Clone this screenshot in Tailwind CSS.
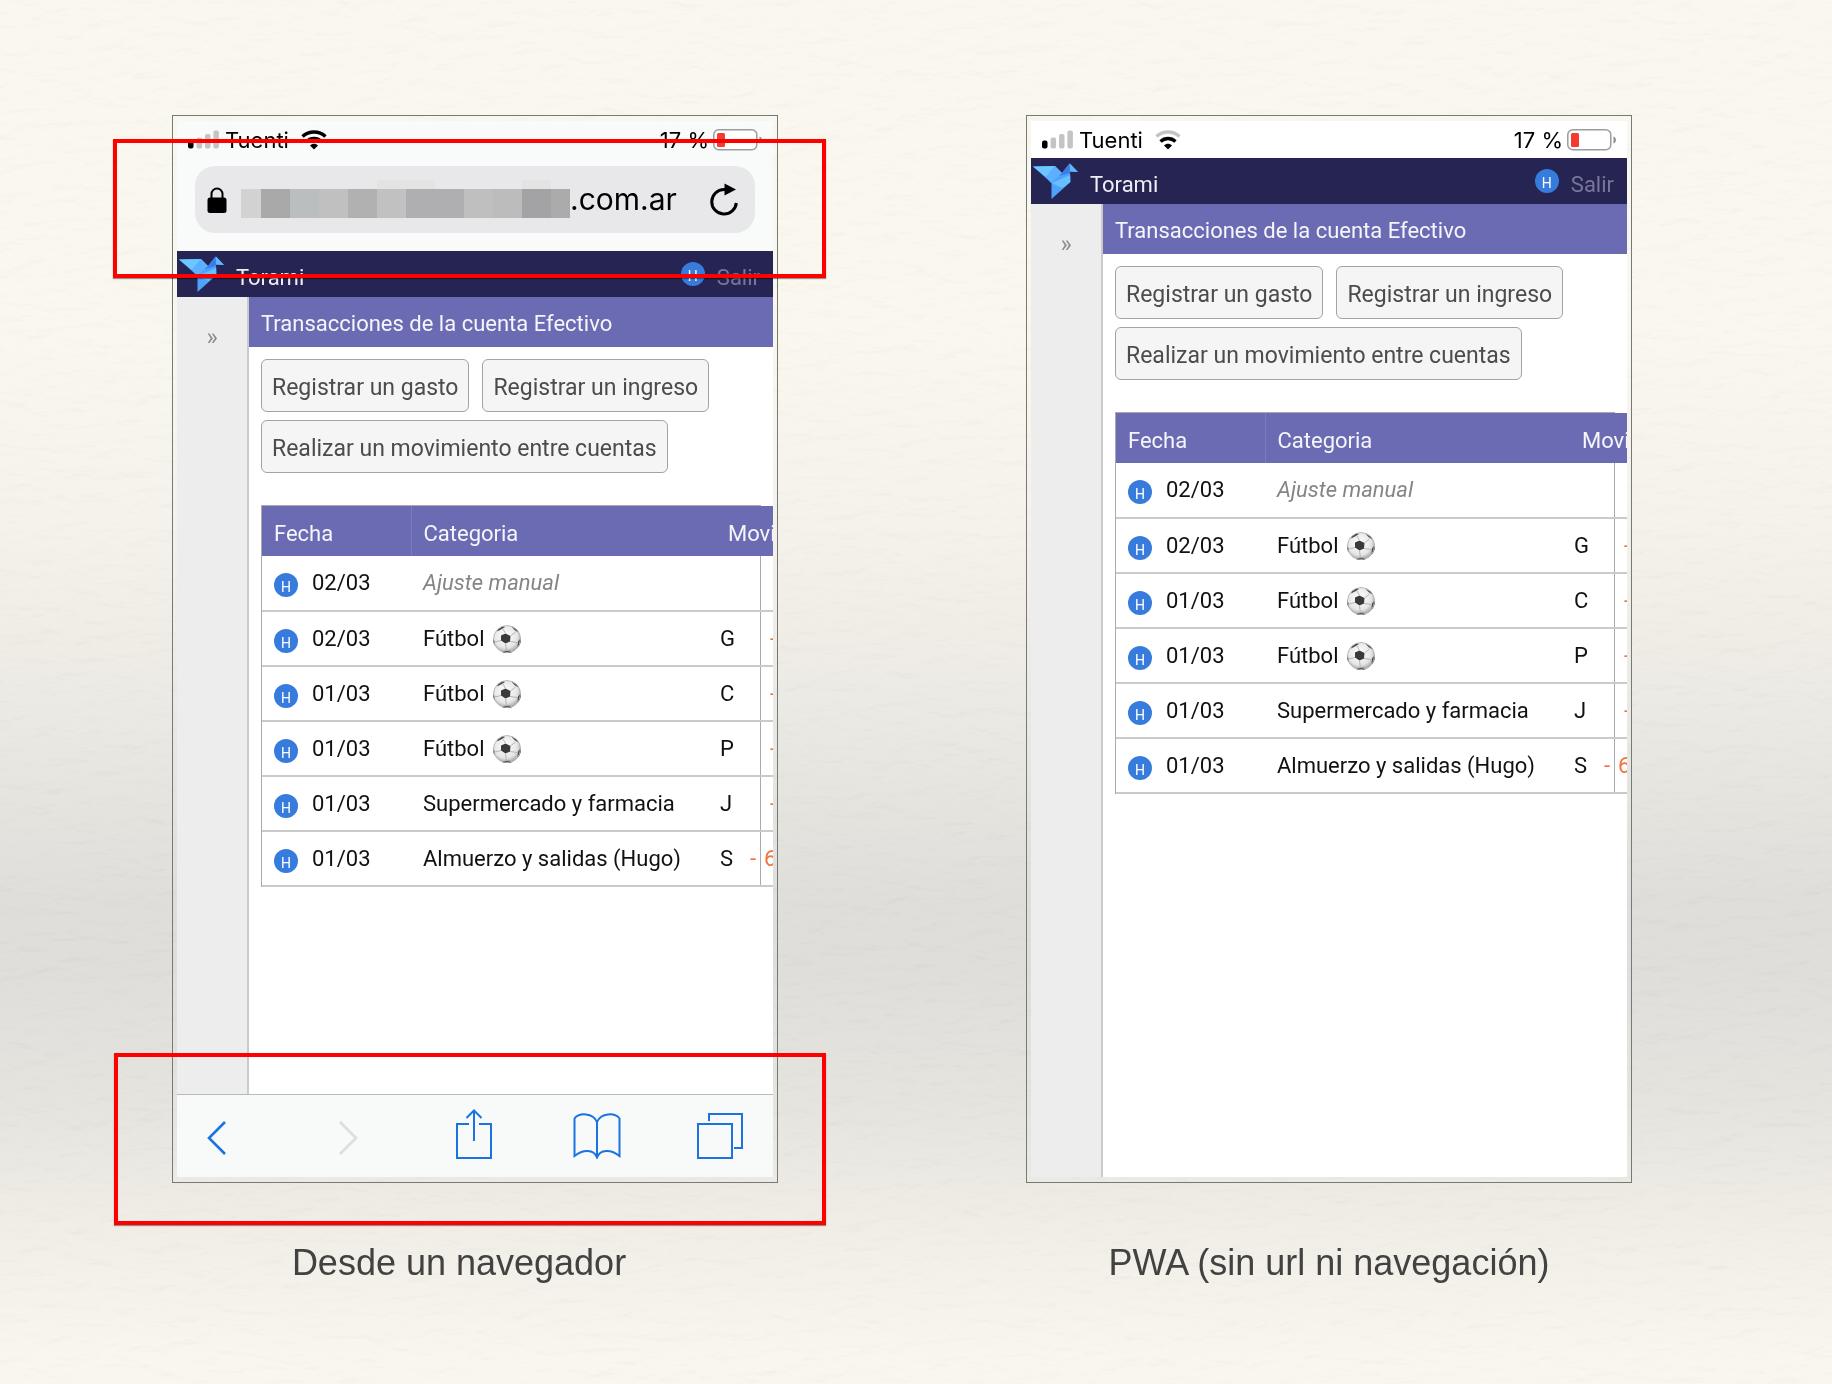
<!DOCTYPE html>
<html lang="es">
<head>
<meta charset="utf-8">
<meta name="viewport" content="width=device-width, initial-scale=1">
<title>Torami: navegador y PWA</title>
<script src="https://cdn.jsdelivr.net/npm/@tailwindcss/browser@4"></script>
</head>
<body class="relative min-h-screen overflow-x-hidden bg-[linear-gradient(180deg,#faf7ef_0%,#faf7ef_24%,#f5f2eb_38%,#ebe9e3_52%,#dfdeda_65%,#dfdeda_70%,#e6e4df_80%,#f2efe8_90%,#f9f6ee_98%)] font-[Roboto,sans-serif]">

<!-- Shared symbols -->
<svg class="absolute size-0" aria-hidden="true">
  <defs>
    <radialGradient id="shine" cx="45%" cy="40%" r="60%">
      <stop offset="0" stop-color="#fff"/><stop offset=".7" stop-color="#e6e6e6"/><stop offset="1" stop-color="#a0a0a0"/>
    </radialGradient>
    <clipPath id="round"><circle cx="14" cy="14" r="14"/></clipPath>
  </defs>
  <symbol id="signal" viewBox="0 0 31 19">
    <rect x="0" y="10.500" width="5.500" height="8" rx="2" fill="#000"/>
    <rect x="8.600" y="7.500" width="5.500" height="11" rx="2" fill="#c4c4c4"/>
    <rect x="17" y="4" width="5.500" height="14.500" rx="2" fill="#c4c4c4"/>
    <rect x="25.400" y="0.500" width="5.500" height="18" rx="2" fill="#c4c4c4"/>
  </symbol>
  <symbol id="battery" viewBox="0 0 50 22">
    <rect x="0.800" y="0.800" width="43" height="20" rx="5" fill="#fff" stroke="#9c9c9c" stroke-width="1.500"/>
    <rect x="4" y="4" width="8" height="14" rx="1.500" fill="#f43b2f"/>
    <path d="M46.500 7.500c3.200.8 3.200 6.200 0 7z" fill="#8e8e8e"/>
  </symbol>
  <symbol id="bird" viewBox="0 0 45 36">
    <path d="M0 3.500 22 3l7 7 7.500-9.500L45 9l-8-.5.500 10.500L18.500 36V20z" fill="#4da3fb"/>
    <path d="M0 3.500 22 3l-9 11z" fill="#6cc6ff"/>
    <path d="M22 3l7 7-11 10-5-6z" fill="#5cb0fd"/>
    <path d="M29 10 36.500.5 37 10 26 13z" fill="#3b7de8"/>
    <path d="M18.500 20 37.200 12v7l-8 6z" fill="#66bfff"/>
    <path d="M37 .5 45 9l-8-.5z" fill="#62b4ff"/>
  </symbol>
  <symbol id="ball" viewBox="0 0 28 28">
    <g clip-path="url(#round)">
      <circle cx="14" cy="14" r="14" fill="url(#shine)"/>
      <path d="M8 10.500 12.500 8.500 17.500 11 17 16.500 12.500 18.500 8 15.500z" fill="#3a3a3a"/>
      <path d="M5 4 10 1l2 1-4 2.500-4 2zM18 1l6 3.500L26 8 21.500 5zM0 13l1.500 3 .5 4-2 1zM28 13l-3 3.500-.5 5.500 3.500-1zM10 26l7-.3 2 2.300H9z" fill="#4a4a4a"/>
      <path d="M12.500 8.500 10 4M17.500 11l5-4M17 16.500l7.500 1M12.500 18.500 13.500 26M8 15.500 2 17" stroke="#b5b5b5" stroke-width="1" fill="none"/>
      <circle cx="14" cy="14" r="13.500" fill="none" stroke="#b8b8b8" stroke-width="1"/>
    </g>
  </symbol>
</svg>

<!-- Paper grain -->
<svg class="pointer-events-none absolute inset-0 h-full w-full mix-blend-multiply" aria-hidden="true">
  <filter id="grain" x="0" y="0" width="100%" height="100%" color-interpolation-filters="sRGB">
    <feTurbulence type="fractalNoise" baseFrequency="0.030 0.080" numOctaves="4" seed="4" result="n"/>
    <feDiffuseLighting in="n" lighting-color="#fff" surfaceScale="2" diffuseConstant="1.120"><feDistantLight azimuth="250" elevation="62"/></feDiffuseLighting>
  </filter>
  <rect width="100%" height="100%" filter="url(#grain)" opacity="0.070"/>
</svg>

<main class="relative flex gap-[248px] pt-[115px] pr-[200px] pb-16 pl-[172px]">

  <!-- Browser -->
  <figure class="min-w-0 flex-1">
    <div class="relative border border-[#747979] px-1 py-[5px]">
      <div class="flex min-h-[1056px] flex-col overflow-hidden bg-white">
        <div class="bg-[#f9fafa] pb-[18px]">
          <div class="flex h-[37px] items-center pt-0.5 pr-2.5 pl-[11px] font-[Inter,sans-serif] text-[22px] text-black">
            <svg class="mb-0.5 h-[19px] w-[31px]"><use href="#signal"/></svg>
            <span class="ml-1.5">Tuenti</span>
            <svg class="mb-0.5 ml-3 h-5 w-[26px]" viewBox="0 0 26 20" fill="none" stroke="#000"><path d="M1.500 6.500C8 .5 18 .5 24.500 6.500" stroke-width="3.400"/><path d="M5.500 11.500c4.500-4 10.500-4 15 0" stroke-width="3.400"/><path d="M9 15.500c2.500-2.300 5.500-2.300 8 0L13 19.500z" fill="#000" stroke="none"/></svg>
            <span class="ml-auto">17 %</span>
            <svg class="mb-0.5 ml-1 h-[22px] w-[50px]"><use href="#battery"/></svg>
          </div>
          <div class="mx-[18px] mt-2 flex h-[67px] items-center rounded-[20px] bg-[#e8e8ea] pr-[17px] pl-3">
            <svg class="h-[26px] w-5 shrink-0" viewBox="0 0 20 26" role="img" aria-label="Conexión segura"><rect x="0.500" y="10.500" width="19" height="15.500" rx="2.500" fill="#000"/><path d="M4.500 11V7a5.500 5.500 0 0 1 11 0v4" fill="none" stroke="#000" stroke-width="2"/></svg>
            <svg class="ml-3.5 h-[49px] w-[329px] shrink-0" viewBox="0 0 329 49" aria-hidden="true" shape-rendering="crispEdges">
              <path d="M136 5h58v9h-58zM281 5h29v9h-29z" fill="#e3e3e4"/>
              <rect y="14" width="20" height="29" fill="#d2d2d3"/><rect x="20" y="14" width="29" height="29" fill="#a9a9aa"/><rect x="49" y="14" width="29" height="29" fill="#bbbebe"/><rect x="78" y="14" width="29" height="29" fill="#c0c0c1"/><rect x="107" y="14" width="29" height="29" fill="#b1b1b2"/><rect x="136" y="14" width="29" height="29" fill="#c1c1c2"/><rect x="165" y="14" width="58" height="29" fill="#afafb2"/><rect x="223" y="14" width="29" height="29" fill="#bfbfc0"/><rect x="252" y="14" width="29" height="29" fill="#bcbcbd"/><rect x="281" y="14" width="29" height="29" fill="#a3a3a5"/><rect x="310" y="14" width="19" height="29" fill="#ababac"/>
            </svg>
            <span class="font-[Inter,sans-serif] text-[30px] text-black">.com.ar</span>
            <button class="ml-auto" aria-label="Recargar"><svg class="h-9 w-7" viewBox="0 0 28 36"><path d="M15 7.500h-1A12.300 12.300 0 1 0 26.300 21" fill="none" stroke="#000" stroke-width="3"/><path d="M14.500 1.500 26 7.500 14.500 13.500z" fill="#000"/></svg></button>
          </div>
        </div>
        <header class="flex h-[46px] items-center bg-[#252452] pt-1 pr-[13px] pl-0.5 text-[22px] leading-7">
          <svg class="mb-1 h-9 w-[45px]" role="img" aria-label="Torami"><use href="#bird"/></svg>
          <span class="ml-3 pt-1 text-[#eeeef4]">Torami</span>
          <span class="mb-1 ml-auto grid size-6 place-items-center rounded-full bg-[#377cdc] text-[14px] text-white">H</span>
          <a href="#" class="ml-3 pt-1 text-[#78779b]">Salir</a>
        </header>
        <div class="flex flex-1">
          <aside class="w-[72px] shrink-0 border-r-2 border-[#cacaca] bg-[#ededed] pt-6 text-center"><button class="text-[24px] leading-8 text-[#8a8a8a]" aria-label="Abrir menú">»</button></aside>
          <section class="min-w-0 flex-1 overflow-hidden">
            <h1 class="flex h-[50px] items-center bg-[#6b6bb3] pt-0.5 pl-3 text-[22px] text-[#f5f5fa]">Transacciones de la cuenta Efectivo</h1>
            <div class="flex flex-wrap gap-x-[13px] gap-y-2 pt-3 pl-3 text-[23px] leading-7 text-[#4c4c4c]">
              <button class="h-[53px] rounded-md border border-[#a0a4a4] bg-[#f5f5f5] px-2.5 pt-1">Registrar un gasto</button>
              <button class="h-[53px] rounded-md border border-[#a0a4a4] bg-[#f5f5f5] px-2.5 pt-1">Registrar un ingreso</button>
              <button class="h-[53px] rounded-md border border-[#a0a4a4] bg-[#f5f5f5] px-2.5 pt-1">Realizar un movimiento entre cuentas</button>
            </div>
            <div class="mt-8 ml-3 w-[500px] border border-b-0 border-[#a9a9b0]">
              <table class="w-[536px] table-fixed border-collapse text-[22px] leading-7 text-[#111]">
                <colgroup><col class="w-[149px]"><col class="w-[298px]"><col class="w-[25px]"><col class="w-16"></colgroup>
                <thead>
                  <tr class="h-[50px] bg-[#6b6bb3] text-left text-[#f5f5fa]">
                    <th class="border-r border-[#7d7dbd] pt-1.5 pl-3 font-normal">Fecha</th>
                    <th class="pt-1.5 pl-3 font-normal">Categoria</th>
                    <th colspan="2" class="pt-1.5 pl-[19px] font-normal">Movi</th>
                  </tr>
                </thead>
                <tbody>
                  <tr class="h-[55px] border-b-2 border-[#cacaca]"><td class="pl-3"><span class="flex items-center gap-3.5"><span class="mt-1 grid size-6 place-items-center rounded-full bg-[#377cdc] text-[14px] text-white">H</span>02/03</span></td><td class="pl-3 text-[#858585] italic">Ajuste manual</td><td></td><td></td></tr>
                  <tr class="h-[55px] border-b-2 border-[#cacaca]"><td class="pl-3"><span class="flex items-center gap-3.5"><span class="mt-1 grid size-6 place-items-center rounded-full bg-[#377cdc] text-[14px] text-white">H</span>02/03</span></td><td class="pl-3"><span class="flex items-center gap-2">Fútbol <svg class="size-7"><use href="#ball"/></svg></span></td><td class="pl-[11px]">G</td><td class="pl-9 text-[#ee7440]">-</td></tr>
                  <tr class="h-[55px] border-b-2 border-[#cacaca]"><td class="pl-3"><span class="flex items-center gap-3.5"><span class="mt-1 grid size-6 place-items-center rounded-full bg-[#377cdc] text-[14px] text-white">H</span>01/03</span></td><td class="pl-3"><span class="flex items-center gap-2">Fútbol <svg class="size-7"><use href="#ball"/></svg></span></td><td class="pl-[11px]">C</td><td class="pl-9 text-[#ee7440]">-</td></tr>
                  <tr class="h-[55px] border-b-2 border-[#cacaca]"><td class="pl-3"><span class="flex items-center gap-3.5"><span class="mt-1 grid size-6 place-items-center rounded-full bg-[#377cdc] text-[14px] text-white">H</span>01/03</span></td><td class="pl-3"><span class="flex items-center gap-2">Fútbol <svg class="size-7"><use href="#ball"/></svg></span></td><td class="pl-[11px]">P</td><td class="pl-9 text-[#ee7440]">-</td></tr>
                  <tr class="h-[55px] border-b-2 border-[#cacaca]"><td class="pl-3"><span class="flex items-center gap-3.5"><span class="mt-1 grid size-6 place-items-center rounded-full bg-[#377cdc] text-[14px] text-white">H</span>01/03</span></td><td class="pl-3">Supermercado y farmacia</td><td class="pl-[11px]">J</td><td class="pl-9 text-[#ee7440]">-</td></tr>
                  <tr class="h-[55px] border-b-2 border-[#cacaca]"><td class="pl-3"><span class="flex items-center gap-3.5"><span class="mt-1 grid size-6 place-items-center rounded-full bg-[#377cdc] text-[14px] text-white">H</span>01/03</span></td><td class="pl-3">Almuerzo y salidas (Hugo)</td><td class="pl-[11px]">S</td><td class="pl-4 text-[#ee7440]">-<span class="ml-2">6</span></td></tr>
                </tbody>
              </table>
            </div>
          </section>
        </div>
        <nav class="flex h-[83px] items-center justify-between border-t border-[#b8baba] bg-[#f8f9f9] pr-[29px] pl-4 text-[#1a73e0]" aria-label="Navegador">
          <button class="grid w-12 place-items-center" aria-label="Atrás"><svg class="mt-1 h-[34px] w-5" viewBox="0 0 20 34" fill="none" stroke="currentColor" stroke-width="2.600"><path d="M18 1 2 17l16 16"/></svg></button>
          <button class="grid w-[58px] place-items-center pl-1.5 text-[#dcdddd]" aria-label="Adelante"><svg class="mt-1 h-[34px] w-5" viewBox="0 0 20 34" fill="none" stroke="currentColor" stroke-width="2.600"><path d="m2 1 16 16L2 33"/></svg></button>
          <button class="grid w-12 place-items-center" aria-label="Compartir"><svg class="mb-1 h-[50px] w-9" viewBox="0 0 36 50" fill="none" stroke="currentColor" stroke-width="2"><path d="M13 15H1v34h34V15H23M18 32V2M10.500 9 18 1.500 25.500 9"/></svg></button>
          <button class="grid w-12 place-items-center" aria-label="Marcadores"><svg class="h-[46px] w-12" viewBox="0 0 48 46" fill="none" stroke="currentColor" stroke-width="2"><path d="M24 9C20-.5 6-.5 1.500 5.500V43C10 36 21 36 24 44.500 27 36 38 36 46.500 43V5.500C42-.5 28-.5 24 9zV44"/></svg></button>
          <button class="grid w-12 place-items-center" aria-label="Pestañas"><svg class="h-[46px] w-12" viewBox="0 0 48 46" fill="none" stroke="currentColor" stroke-width="2"><path d="M2 11h34v34H2zM13 8V1h33v34h-8"/></svg></button>
        </nav>
      </div>
      <div class="pointer-events-none absolute top-[23px] -right-[49px] -left-[60px] h-[139px] border-4 border-[#ff0000] shadow-[0_1px_1px_rgba(0,0,0,0.4)]"></div>
      <div class="pointer-events-none absolute top-[937px] -right-[49px] -left-[59px] h-[172px] border-4 border-[#ff0000] shadow-[0_1px_1px_rgba(0,0,0,0.4)]"></div>
    </div>
    <figcaption class="mt-15 pr-8 text-center font-['Liberation_Sans',Arial,sans-serif] text-[36px] leading-10 text-[#424242]">Desde un navegador</figcaption>
  </figure>

  <!-- Installed app -->
  <figure class="min-w-0 flex-1">
    <div class="border border-[#747979] px-1 py-[5px]">
      <div class="flex min-h-[1056px] flex-col overflow-hidden bg-white">
        <div class="flex h-[37px] items-center pt-0.5 pr-2.5 pl-[11px] font-[Inter,sans-serif] text-[22px] text-black">
          <svg class="mb-0.5 h-[19px] w-[31px]"><use href="#signal"/></svg>
          <span class="ml-1.5">Tuenti</span>
          <svg class="mb-0.5 ml-3 h-5 w-[26px]" viewBox="0 0 26 20" fill="none" stroke="#000"><path d="M1.500 6.500C8 .5 18 .5 24.500 6.500" stroke="#c4c4c4" stroke-width="3.400"/><path d="M5.500 11.500c4.500-4 10.500-4 15 0" stroke-width="3.400"/><path d="M9 15.500c2.500-2.300 5.500-2.300 8 0L13 19.500z" fill="#000" stroke="none"/></svg>
          <span class="ml-auto">17 %</span>
          <svg class="mb-0.5 ml-1 h-[22px] w-[50px]"><use href="#battery"/></svg>
        </div>
        <header class="flex h-[46px] items-center bg-[#252452] pt-1 pr-[13px] pl-0.5 text-[22px] leading-7">
          <svg class="mb-1 h-9 w-[45px]" role="img" aria-label="Torami"><use href="#bird"/></svg>
          <span class="ml-3 pt-1 text-[#eeeef4]">Torami</span>
          <span class="mb-1 ml-auto grid size-6 place-items-center rounded-full bg-[#377cdc] text-[14px] text-white">H</span>
          <a href="#" class="ml-3 pt-1 text-[#78779b]">Salir</a>
        </header>
        <div class="flex flex-1">
          <aside class="w-[72px] shrink-0 border-r-2 border-[#cacaca] bg-[#ededed] pt-6 text-center"><button class="text-[24px] leading-8 text-[#8a8a8a]" aria-label="Abrir menú">»</button></aside>
          <section class="min-w-0 flex-1 overflow-hidden">
            <h1 class="flex h-[50px] items-center bg-[#6b6bb3] pt-0.5 pl-3 text-[22px] text-[#f5f5fa]">Transacciones de la cuenta Efectivo</h1>
            <div class="flex flex-wrap gap-x-[13px] gap-y-2 pt-3 pl-3 text-[23px] leading-7 text-[#4c4c4c]">
              <button class="h-[53px] rounded-md border border-[#a0a4a4] bg-[#f5f5f5] px-2.5 pt-1">Registrar un gasto</button>
              <button class="h-[53px] rounded-md border border-[#a0a4a4] bg-[#f5f5f5] px-2.5 pt-1">Registrar un ingreso</button>
              <button class="h-[53px] rounded-md border border-[#a0a4a4] bg-[#f5f5f5] px-2.5 pt-1">Realizar un movimiento entre cuentas</button>
            </div>
            <div class="mt-8 ml-3 w-[500px] border border-b-0 border-[#a9a9b0]">
              <table class="w-[536px] table-fixed border-collapse text-[22px] leading-7 text-[#111]">
                <colgroup><col class="w-[149px]"><col class="w-[298px]"><col class="w-[25px]"><col class="w-16"></colgroup>
                <thead>
                  <tr class="h-[50px] bg-[#6b6bb3] text-left text-[#f5f5fa]">
                    <th class="border-r border-[#7d7dbd] pt-1.5 pl-3 font-normal">Fecha</th>
                    <th class="pt-1.5 pl-3 font-normal">Categoria</th>
                    <th colspan="2" class="pt-1.5 pl-[19px] font-normal">Movi</th>
                  </tr>
                </thead>
                <tbody>
                  <tr class="h-[55px] border-b-2 border-[#cacaca]"><td class="pl-3"><span class="flex items-center gap-3.5"><span class="mt-1 grid size-6 place-items-center rounded-full bg-[#377cdc] text-[14px] text-white">H</span>02/03</span></td><td class="pl-3 text-[#858585] italic">Ajuste manual</td><td></td><td></td></tr>
                  <tr class="h-[55px] border-b-2 border-[#cacaca]"><td class="pl-3"><span class="flex items-center gap-3.5"><span class="mt-1 grid size-6 place-items-center rounded-full bg-[#377cdc] text-[14px] text-white">H</span>02/03</span></td><td class="pl-3"><span class="flex items-center gap-2">Fútbol <svg class="size-7"><use href="#ball"/></svg></span></td><td class="pl-[11px]">G</td><td class="pl-9 text-[#ee7440]">-</td></tr>
                  <tr class="h-[55px] border-b-2 border-[#cacaca]"><td class="pl-3"><span class="flex items-center gap-3.5"><span class="mt-1 grid size-6 place-items-center rounded-full bg-[#377cdc] text-[14px] text-white">H</span>01/03</span></td><td class="pl-3"><span class="flex items-center gap-2">Fútbol <svg class="size-7"><use href="#ball"/></svg></span></td><td class="pl-[11px]">C</td><td class="pl-9 text-[#ee7440]">-</td></tr>
                  <tr class="h-[55px] border-b-2 border-[#cacaca]"><td class="pl-3"><span class="flex items-center gap-3.5"><span class="mt-1 grid size-6 place-items-center rounded-full bg-[#377cdc] text-[14px] text-white">H</span>01/03</span></td><td class="pl-3"><span class="flex items-center gap-2">Fútbol <svg class="size-7"><use href="#ball"/></svg></span></td><td class="pl-[11px]">P</td><td class="pl-9 text-[#ee7440]">-</td></tr>
                  <tr class="h-[55px] border-b-2 border-[#cacaca]"><td class="pl-3"><span class="flex items-center gap-3.5"><span class="mt-1 grid size-6 place-items-center rounded-full bg-[#377cdc] text-[14px] text-white">H</span>01/03</span></td><td class="pl-3">Supermercado y farmacia</td><td class="pl-[11px]">J</td><td class="pl-9 text-[#ee7440]">-</td></tr>
                  <tr class="h-[55px] border-b-2 border-[#cacaca]"><td class="pl-3"><span class="flex items-center gap-3.5"><span class="mt-1 grid size-6 place-items-center rounded-full bg-[#377cdc] text-[14px] text-white">H</span>01/03</span></td><td class="pl-3">Almuerzo y salidas (Hugo)</td><td class="pl-[11px]">S</td><td class="pl-4 text-[#ee7440]">-<span class="ml-2">6</span></td></tr>
                </tbody>
              </table>
            </div>
          </section>
        </div>
      </div>
    </div>
    <figcaption class="mt-15 text-center font-['Liberation_Sans',Arial,sans-serif] text-[36px] leading-10 text-[#424242]">PWA (sin url ni navegación)</figcaption>
  </figure>
</main>
</body>
</html>
